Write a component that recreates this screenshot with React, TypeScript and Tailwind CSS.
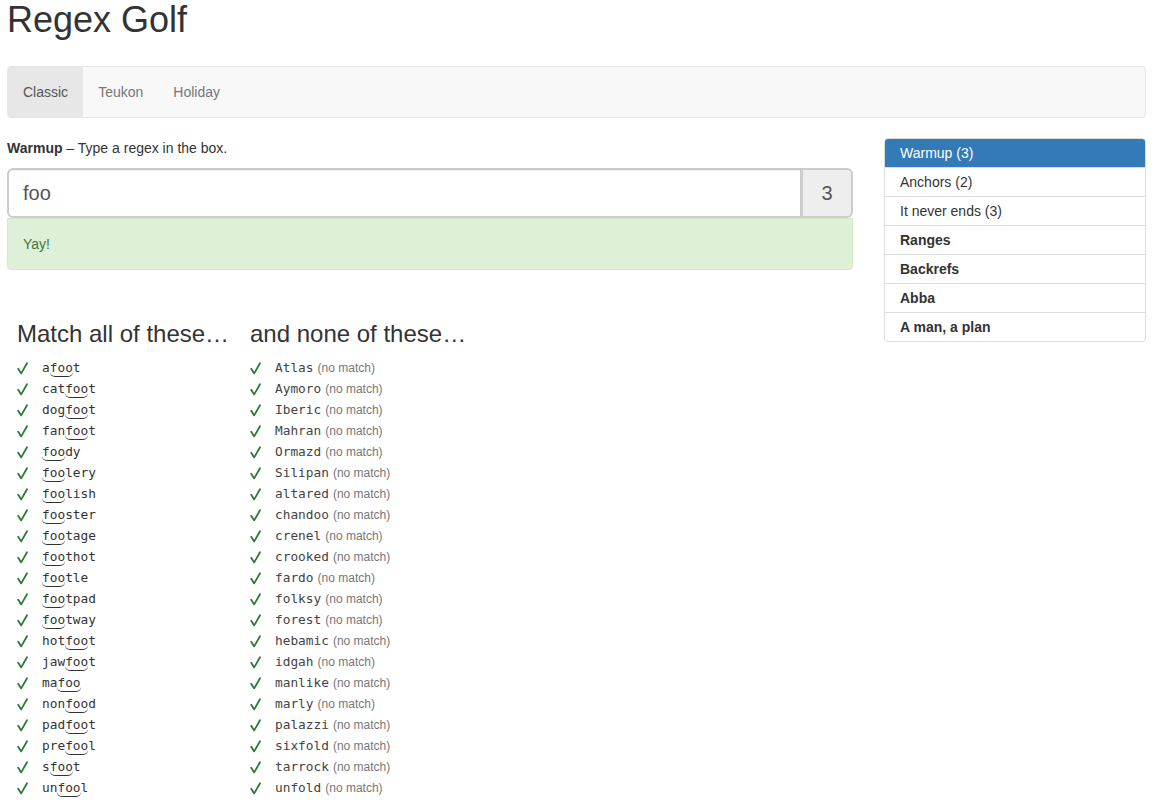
import React from "react";

const matches = [
  "afoot","catfoot","dogfoot","fanfoot","foody","foolery","foolish","fooster","footage","foothot","footle","footpad","footway","hotfoot","jawfoot","mafoo","nonfood","padfoot","prefool","sfoot","unfool",
];
const nonMatches = [
  "Atlas","Aymoro","Iberic","Mahran","Ormazd","Silipan","altared","chandoo","crenel","crooked","fardo","folksy","forest","hebamic","idgah","manlike","marly","palazzi","sixfold","tarrock","unfold",
];

const mono = { fontFamily: "'DejaVu Sans Mono', 'Liberation Mono', monospace" };

function Check() {
  return (
    <span className="inline-flex w-[25px] items-center">
      <svg width="11" height="13" viewBox="0 0 11 13" className="mt-[1px]">
        <path d="M1.2 6.8 L4.2 11.4 L10 1.2" fill="none" stroke="#2d7a34" strokeWidth="1.8" strokeLinecap="round" strokeLinejoin="round" />
      </svg>
    </span>
  );
}

function Word({ w }: { w: string }) {
  const i = w.indexOf("foo");
  if (i < 0) return <span>{w}</span>;
  return (
    <span>
      {w.slice(0, i)}
      <span className="inline-block leading-[17px] border-b border-[#333] rounded-b-[5px]">foo</span>
      {w.slice(i + 3)}
    </span>
  );
}

const levels = [
  { name: "Warmup (3)", active: true },
  { name: "Anchors (2)" },
  { name: "It never ends (3)" },
  { name: "Ranges", bold: true },
  { name: "Backrefs", bold: true },
  { name: "Abba", bold: true },
  { name: "A man, a plan", bold: true },
];

export default function App() {
  return (
    <div className="min-h-[809px] bg-white text-[#333] text-[14px] leading-[20px] font-['Liberation_Sans',Arial,sans-serif] pl-[7px] pr-[13px]">
      <h1 className="text-[36px] leading-[40px] font-normal m-0">Regex Golf</h1>
      <div className="mt-[26px] h-[52px] flex bg-[#f8f8f8] border border-[#e7e7e7] rounded-[4px] overflow-hidden">
        <div className="px-[15px] flex items-center bg-[#e7e7e7] text-[#555]">Classic</div>
        <div className="px-[15px] flex items-center text-[#777]">Teukon</div>
        <div className="px-[15px] flex items-center text-[#777]">Holiday</div>
      </div>
      <div className="mt-[20px] flex gap-[31px]">
        <div className="w-[846px] shrink-0">
          <p className="m-0"><b>Warmup</b> – Type a regex in the box.</p>
          <div className="mt-[10px] flex h-[50px]">
            <div className="flex-1 flex items-center border-2 border-[#ccc] rounded-l-[6px] pl-[14px] text-[20px] text-[#555] shadow-[inset_0_1px_1px_rgba(0,0,0,0.075)]">foo</div>
            <div className="w-[51px] flex items-center justify-center bg-[#eee] border-2 border-l border-[#ccc] rounded-r-[6px] text-[20px] text-[#555]">3</div>
          </div>
          <div className="h-[52px] flex items-center px-[15px] bg-[#dff0d8] border border-[#d6e9c6] rounded-b-[4px] text-[#3c763d]">Yay!</div>
          <div className="mt-[51px] pl-[10px] flex">
            <div className="w-[233px]">
              <h3 className="text-[24px] leading-[26px] font-normal m-0">Match all of these…</h3>
              <div className="mt-[10px]">
                {matches.map((w) => (
                  <div key={w} className="h-[21px] flex items-center">
                    <Check />
                    <span style={mono} className="text-[12.8px] text-[#333]"><Word w={w} /></span>
                  </div>
                ))}
              </div>
            </div>
            <div>
              <h3 className="text-[24px] leading-[26px] font-normal m-0">and none of these…</h3>
              <div className="mt-[10px]">
                {nonMatches.map((w) => (
                  <div key={w} className="h-[21px] flex items-center whitespace-nowrap">
                    <Check />
                    <span style={mono} className="text-[12.8px] text-[#444]">{w}</span>
                    <span className="ml-[4px] text-[12px] text-[#777]">(no match)</span>
                  </div>
                ))}
              </div>
            </div>
          </div>
        </div>
        <div className="w-[262px] shrink-0">
          <div className="border border-[#ddd] rounded-[4px] overflow-hidden">
            {levels.map((l, i) => (
              <div
                key={l.name}
                className={
                  "flex items-center px-[15px] pb-[1px] " +
                  (i > 0 ? "h-[29px] border-t border-[#ddd] " : "h-[28px] ") +
                  (l.active ? "bg-[#337ab7] text-white " : "text-[#333] ") +
                  (l.bold ? "font-bold" : "")
                }
              >
                {l.name}
              </div>
            ))}
          </div>
        </div>
      </div>
    </div>
  );
}
